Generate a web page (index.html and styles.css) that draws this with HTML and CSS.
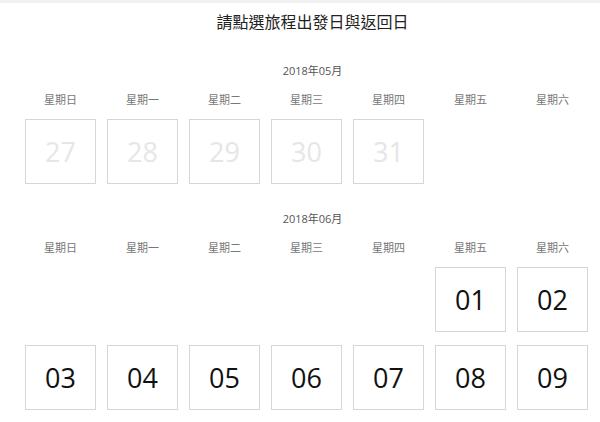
FILE: index.html
```html
<!DOCTYPE html>
<html lang="zh-Hant">
<head>
<meta charset="utf-8">
<title>請點選旅程出發日與返回日</title>
<link rel="stylesheet" href="styles.css">
</head>
<body>
<div class="topbar"></div>
<div class="page">
  <h1 class="title">請點選旅程出發日與返回日</h1>

  <section class="month">
    <div class="month-label">2018年05月</div>
    <div class="grid weekdays">
      <div>星期日</div><div>星期一</div><div>星期二</div><div>星期三</div><div>星期四</div><div>星期五</div><div>星期六</div>
    </div>
    <div class="grid days">
      <div class="day off">27</div>
      <div class="day off">28</div>
      <div class="day off">29</div>
      <div class="day off">30</div>
      <div class="day off">31</div>
    </div>
  </section>

  <section class="month">
    <div class="month-label">2018年06月</div>
    <div class="grid weekdays">
      <div>星期日</div><div>星期一</div><div>星期二</div><div>星期三</div><div>星期四</div><div>星期五</div><div>星期六</div>
    </div>
    <div class="grid days">
      <div class="empty"></div>
      <div class="empty"></div>
      <div class="empty"></div>
      <div class="empty"></div>
      <div class="empty"></div>
      <div class="day">01</div>
      <div class="day">02</div>
      <div class="day">03</div>
      <div class="day">04</div>
      <div class="day">05</div>
      <div class="day">06</div>
      <div class="day">07</div>
      <div class="day">08</div>
      <div class="day">09</div>
    </div>
  </section>
</div>
</body>
</html>
```
FILE: styles.css
```css
html, body {
  margin: 0;
  padding: 0;
  background: #fff;
  font-family: "Open Sans", "Noto Sans CJK TC", sans-serif;
  overflow: hidden;
}
.topbar {
  height: 3px;
  background: #f1f1f1;
}
.page {
  padding-left: 25px;
}
.title {
  margin: 6px 0 0;
  font-family: "Noto Sans CJK TC", sans-serif;
  font-size: 16px;
  font-weight: normal;
  line-height: 24px;
  color: #222;
  text-align: center;
}
.month {
  margin-top: 30px;
}
.month + .month {
  margin-top: 27px;
}
.month-label {
  font-size: 11px;
  line-height: 16px;
  height: 16px;
  color: #555;
  text-align: center;
}
.grid {
  display: grid;
  grid-template-columns: repeat(7, 71px);
  column-gap: 11px;
}
.weekdays {
  margin-top: 12px;
  font-family: "Noto Sans CJK TC", sans-serif;
  font-size: 11px;
  line-height: 16px;
  color: #777;
  text-align: center;
}
.days {
  margin-top: 12px;
  row-gap: 13px;
}
.day {
  box-sizing: border-box;
  height: 65px;
  border: 1px solid #d6d6d6;
  display: flex;
  align-items: center;
  justify-content: center;
  font-size: 27px;
  color: #111;
}
.day.off {
  color: #e6e6e6;
}
.empty {
  height: 65px;
}
```
